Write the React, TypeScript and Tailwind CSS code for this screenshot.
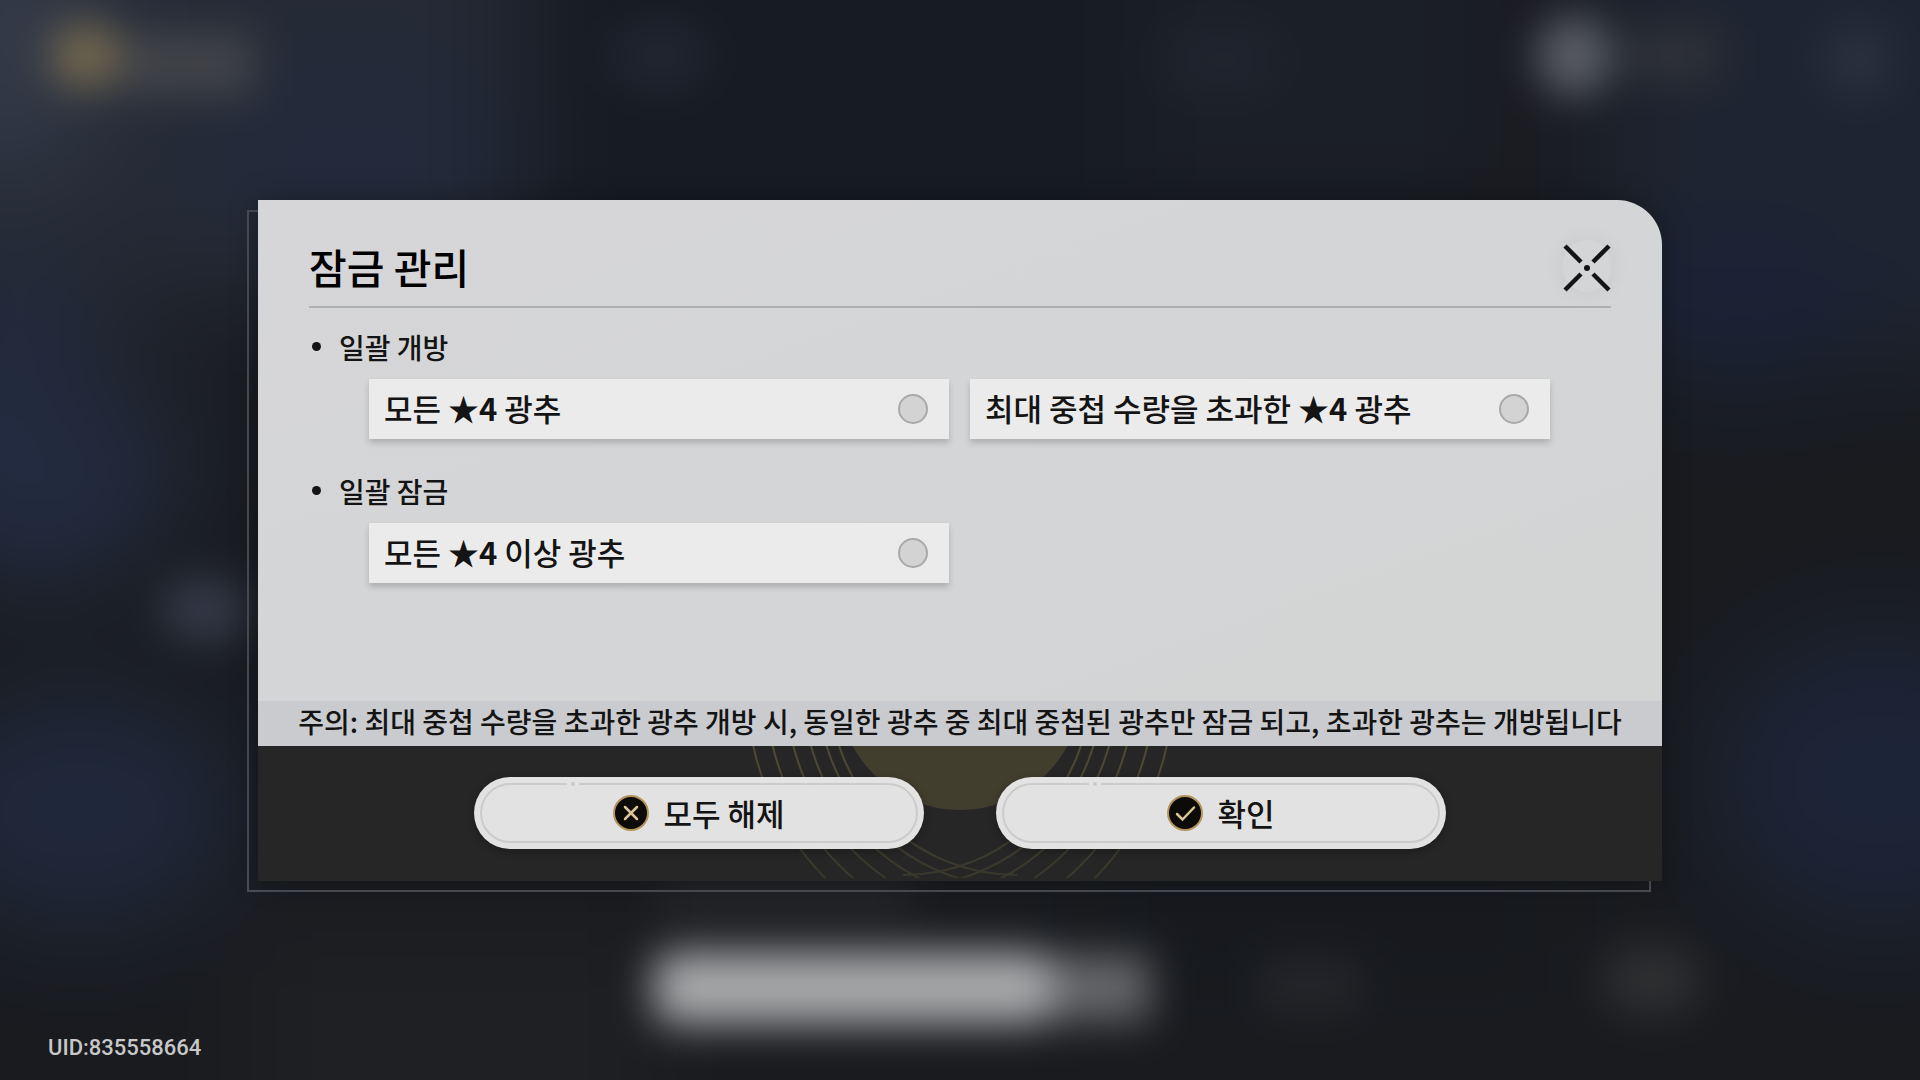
import { useState } from "react";

interface OptionItem {
  id: string;
  rarity: string;
  before: string;
  after: string;
}

interface OptionProps {
  option: OptionItem;
  checked: boolean;
  onToggle: (id: string) => void;
}

interface ActionButtonProps {
  label: string;
  icon: "cross" | "check";
  onClick?: () => void;
}

const sections: { title: string; options: OptionItem[] }[] = [
  {
    title: "일괄 개방",
    options: [
      { id: "unlock-4", before: "모든", rarity: "★4", after: "광추" },
      { id: "unlock-4-over", before: "최대 중첩 수량을 초과한", rarity: "★4", after: "광추" },
    ],
  },
  {
    title: "일괄 잠금",
    options: [{ id: "lock-4", before: "모든", rarity: "★4", after: "이상 광추" }],
  },
];

const orbits = [270, 251, 231, 214, 199, 187];

function Backdrop() {
  return (
    <svg
      viewBox="0 0 1920 1080"
      preserveAspectRatio="none"
      className="absolute inset-0 h-full w-full bg-[#191b20]"
      colorInterpolationFilters="sRGB"
      aria-hidden="true"
    >
      <defs>
        <filter id="haze" filterUnits="userSpaceOnUse" x="-300" y="-300" width="2520" height="1680">
          <feGaussianBlur stdDeviation="50" />
        </filter>
        <filter id="glow" filterUnits="userSpaceOnUse" x="-100" y="-100" width="2120" height="1280">
          <feGaussianBlur stdDeviation="20" />
        </filter>
      </defs>
      <g filter="url(#glow)">
        <g filter="url(#haze)">
          <rect x="-300" y="-300" width="2520" height="1680" fill="#191b1f" />
          <rect x="-300" y="-300" width="820" height="600" fill="#252a36" />
          <ellipse cx="10" cy="30" rx="90" ry="150" fill="#343a48" />
          <ellipse cx="360" cy="160" rx="160" ry="100" fill="#232a3b" />
          <ellipse cx="40" cy="440" rx="150" ry="150" fill="#222b40" />
          <ellipse cx="130" cy="350" rx="50" ry="90" fill="#20232c" />
          <ellipse cx="80" cy="810" rx="160" ry="120" fill="#1f283b" />
          <rect x="520" y="-300" width="620" height="560" fill="#171b23" />
          <rect x="1140" y="-300" width="340" height="500" fill="#1b1f28" />
          <rect x="1600" y="-300" width="620" height="660" fill="#1e2431" />
          <ellipse cx="1740" cy="310" rx="130" ry="80" fill="#1b2236" />
          <ellipse cx="1880" cy="780" rx="170" ry="150" fill="#1c2437" />
          <rect x="250" y="930" width="400" height="250" fill="#1f2024" />
          <rect x="1100" y="880" width="450" height="80" fill="#15181d" />
        </g>
        <ellipse cx="86" cy="56" rx="36" ry="34" fill="#72684f" />
        <rect x="120" y="32" width="135" height="64" fill="#414348" />
        <ellipse cx="1574" cy="56" rx="38" ry="40" fill="#5b5e65" />
        <rect x="1625" y="30" width="95" height="50" fill="#303238" />
        <ellipse cx="1858" cy="60" rx="36" ry="36" fill="#2a303e" />
        <ellipse cx="660" cy="56" rx="50" ry="36" fill="#202531" />
        <ellipse cx="1220" cy="60" rx="60" ry="36" fill="#20242e" />
        <ellipse cx="205" cy="610" rx="46" ry="34" fill="#333847" />
        <rect x="660" y="870" width="250" height="50" fill="#242529" />
        <rect x="1050" y="955" width="100" height="66" fill="#66676a" />
        <rect x="654" y="952" width="398" height="72" rx="20" fill="#a9aaac" />
        <rect x="1260" y="960" width="100" height="50" fill="#24262a" />
        <ellipse cx="1652" cy="980" rx="50" ry="36" fill="#2e2f31" />
      </g>
    </svg>
  );
}

function Option({ option, checked, onToggle }: OptionProps) {
  return (
    <label
      htmlFor={option.id}
      className="flex h-[60px] cursor-pointer items-center justify-between bg-[#ebebeb] pl-[15px] pr-[21px] text-[31px] shadow-[0_4px_6px_rgba(0,0,0,0.18)]"
    >
      <span className="whitespace-nowrap">
        {option.before} <b className="font-bold">{option.rarity}</b> {option.after}
      </span>
      <input
        id={option.id}
        type="checkbox"
        checked={checked}
        onChange={() => onToggle(option.id)}
        className="size-[30px] cursor-pointer appearance-none rounded-full border-2 border-[#a9a9a9] bg-[#d3d3d3] checked:bg-[#1a1a1a]"
      />
    </label>
  );
}

function ActionButton({ label, icon, onClick }: ActionButtonProps) {
  return (
    <button
      type="button"
      onClick={onClick}
      className="relative h-[72px] w-[450px] rounded-full bg-[#e8e8e8]/97 p-[6px] text-[31px] shadow-[0_2px_8px_rgba(0,0,0,0.3)]"
    >
      <span className="absolute left-[93px] top-[5px] flex h-1 w-3 items-center justify-center bg-[#e2e2e2]">
        <span className="size-1 rounded-full bg-[#cbcbcb]" />
      </span>
      <span className="flex h-full items-center justify-center gap-3.5 rounded-full border-2 border-[#cbcbcb]">
        <svg viewBox="0 0 36 36" className="size-9" fill="none" aria-hidden="true">
          <circle cx="18" cy="18" r="17" fill="#0c0b08" stroke="#b3955c" strokeWidth="2" />
          <path
            d={icon === "cross" ? "M12 12l12 12M24 12L12 24" : "M10 19l5.500 5.500L27 12.500"}
            stroke="#dcc596"
            strokeWidth="2.500"
            strokeLinecap="round"
          />
        </svg>
        <span className="leading-10">{label}</span>
      </span>
    </button>
  );
}

function Orbits() {
  return (
    <svg
      viewBox="0 0 440 135"
      className="absolute left-1/2 top-0 h-full w-[440px] -translate-x-1/2"
      fill="none"
      aria-hidden="true"
    >
      <defs>
        <linearGradient id="fade" gradientUnits="userSpaceOnUse" x1="0" y1="0" x2="0" y2="135">
          <stop offset="0" stopColor="#504a34" />
          <stop offset="1" stopColor="#39372b" />
        </linearGradient>
        <clipPath id="footer-edge">
          <rect width="440" height="132" />
        </clipPath>
      </defs>
      <circle cx="220" cy="-58" r="122" fill="#423e2e" />
      <g stroke="url(#fade)" strokeWidth="2" clipPath="url(#footer-edge)">
        {orbits.map((r) => (
          <g key={r}>
            <path d={`M${277 - r} -58A${r} ${r} 0 0 0 277 ${r - 58}`} />
            <path d={`M${163 + r} -58A${r} ${r} 0 0 1 163 ${r - 58}`} />
          </g>
        ))}
      </g>
    </svg>
  );
}

export default function App() {
  const [selected, setSelected] = useState<string[]>([]);

  const toggle = (id: string) =>
    setSelected((current) =>
      current.includes(id) ? current.filter((item) => item !== id) : [...current, id],
    );

  return (
    <main className="relative flex min-h-screen items-center justify-center font-['Noto_Sans_CJK_KR',sans-serif] font-medium text-[#141414]">
      <Backdrop />

      <div className="relative w-full max-w-[1404px]">
        <div className="absolute -bottom-[11px] -left-[11px] right-[11px] top-[10px] rounded-tr-[45px] border-2 border-[#4b4e55]" />

        <section
          role="dialog"
          aria-labelledby="dialog-title"
          className="relative flex flex-col overflow-hidden rounded-tr-[45px] bg-[#262626] shadow-[0_0_30px_rgba(0,0,0,0.3)]"
        >
          <div className="bg-linear-to-br from-[#d6d6d8] via-[#d4d5d6] to-[#d3d4d4] px-[51px] pb-[118px] pt-[39px]">
            <header className="flex items-center justify-between border-b-2 border-[#aeafb0] pb-3">
              <h1 id="dialog-title" className="text-[41px] leading-[55px] text-black">
                잠금 관리
              </h1>
              <button
                type="button"
                aria-label="닫기"
                className="rounded-full pt-1 shadow-[0_0_24px_rgba(0,0,0,0.06)]"
              >
                <svg
                  viewBox="0 0 48 48"
                  className="size-12"
                  fill="none"
                  stroke="#141414"
                  strokeWidth="4.500"
                >
                  <path d="M2 2l16 16M46 2L30 18M2 46l16-16M46 46L30 30" />
                  <circle cx="24" cy="24" r="3" fill="#141414" stroke="none" />
                </svg>
              </button>
            </header>

            <div className="flex flex-col gap-8 pt-[19px]">
              {sections.map((section) => (
                <section key={section.title}>
                  <h2 className="flex items-center gap-[18px] pl-[3px] text-[28px] leading-10">
                    <span className="size-[9px] rounded-full bg-[#141414]" />
                    {section.title}
                  </h2>
                  <div className="grid grid-cols-2 gap-[21px] pl-[60px] pr-[61px] pt-3">
                    {section.options.map((option) => (
                      <Option
                        key={option.id}
                        option={option}
                        checked={selected.includes(option.id)}
                        onToggle={toggle}
                      />
                    ))}
                  </div>
                </section>
              ))}
            </div>
          </div>

          <p className="whitespace-nowrap bg-[#cacbcf] pb-[5px] text-center text-[28px] leading-10">
            주의: 최대 중첩 수량을 초과한 광추 개방 시, 동일한 광추 중 최대 중첩된 광추만 잠금 되고,
            초과한 광추는 개방됩니다
          </p>

          <footer className="relative flex justify-center gap-[72px] pb-8 pt-[31px]">
            <Orbits />
            <ActionButton label="모두 해제" icon="cross" onClick={() => setSelected([])} />
            <ActionButton label="확인" icon="check" />
          </footer>
        </section>
      </div>

      <p className="absolute bottom-5 left-12 font-['Roboto',sans-serif] text-[22px] leading-6 text-[#c8c8c8]">
        UID:835558664
      </p>
    </main>
  );
}
